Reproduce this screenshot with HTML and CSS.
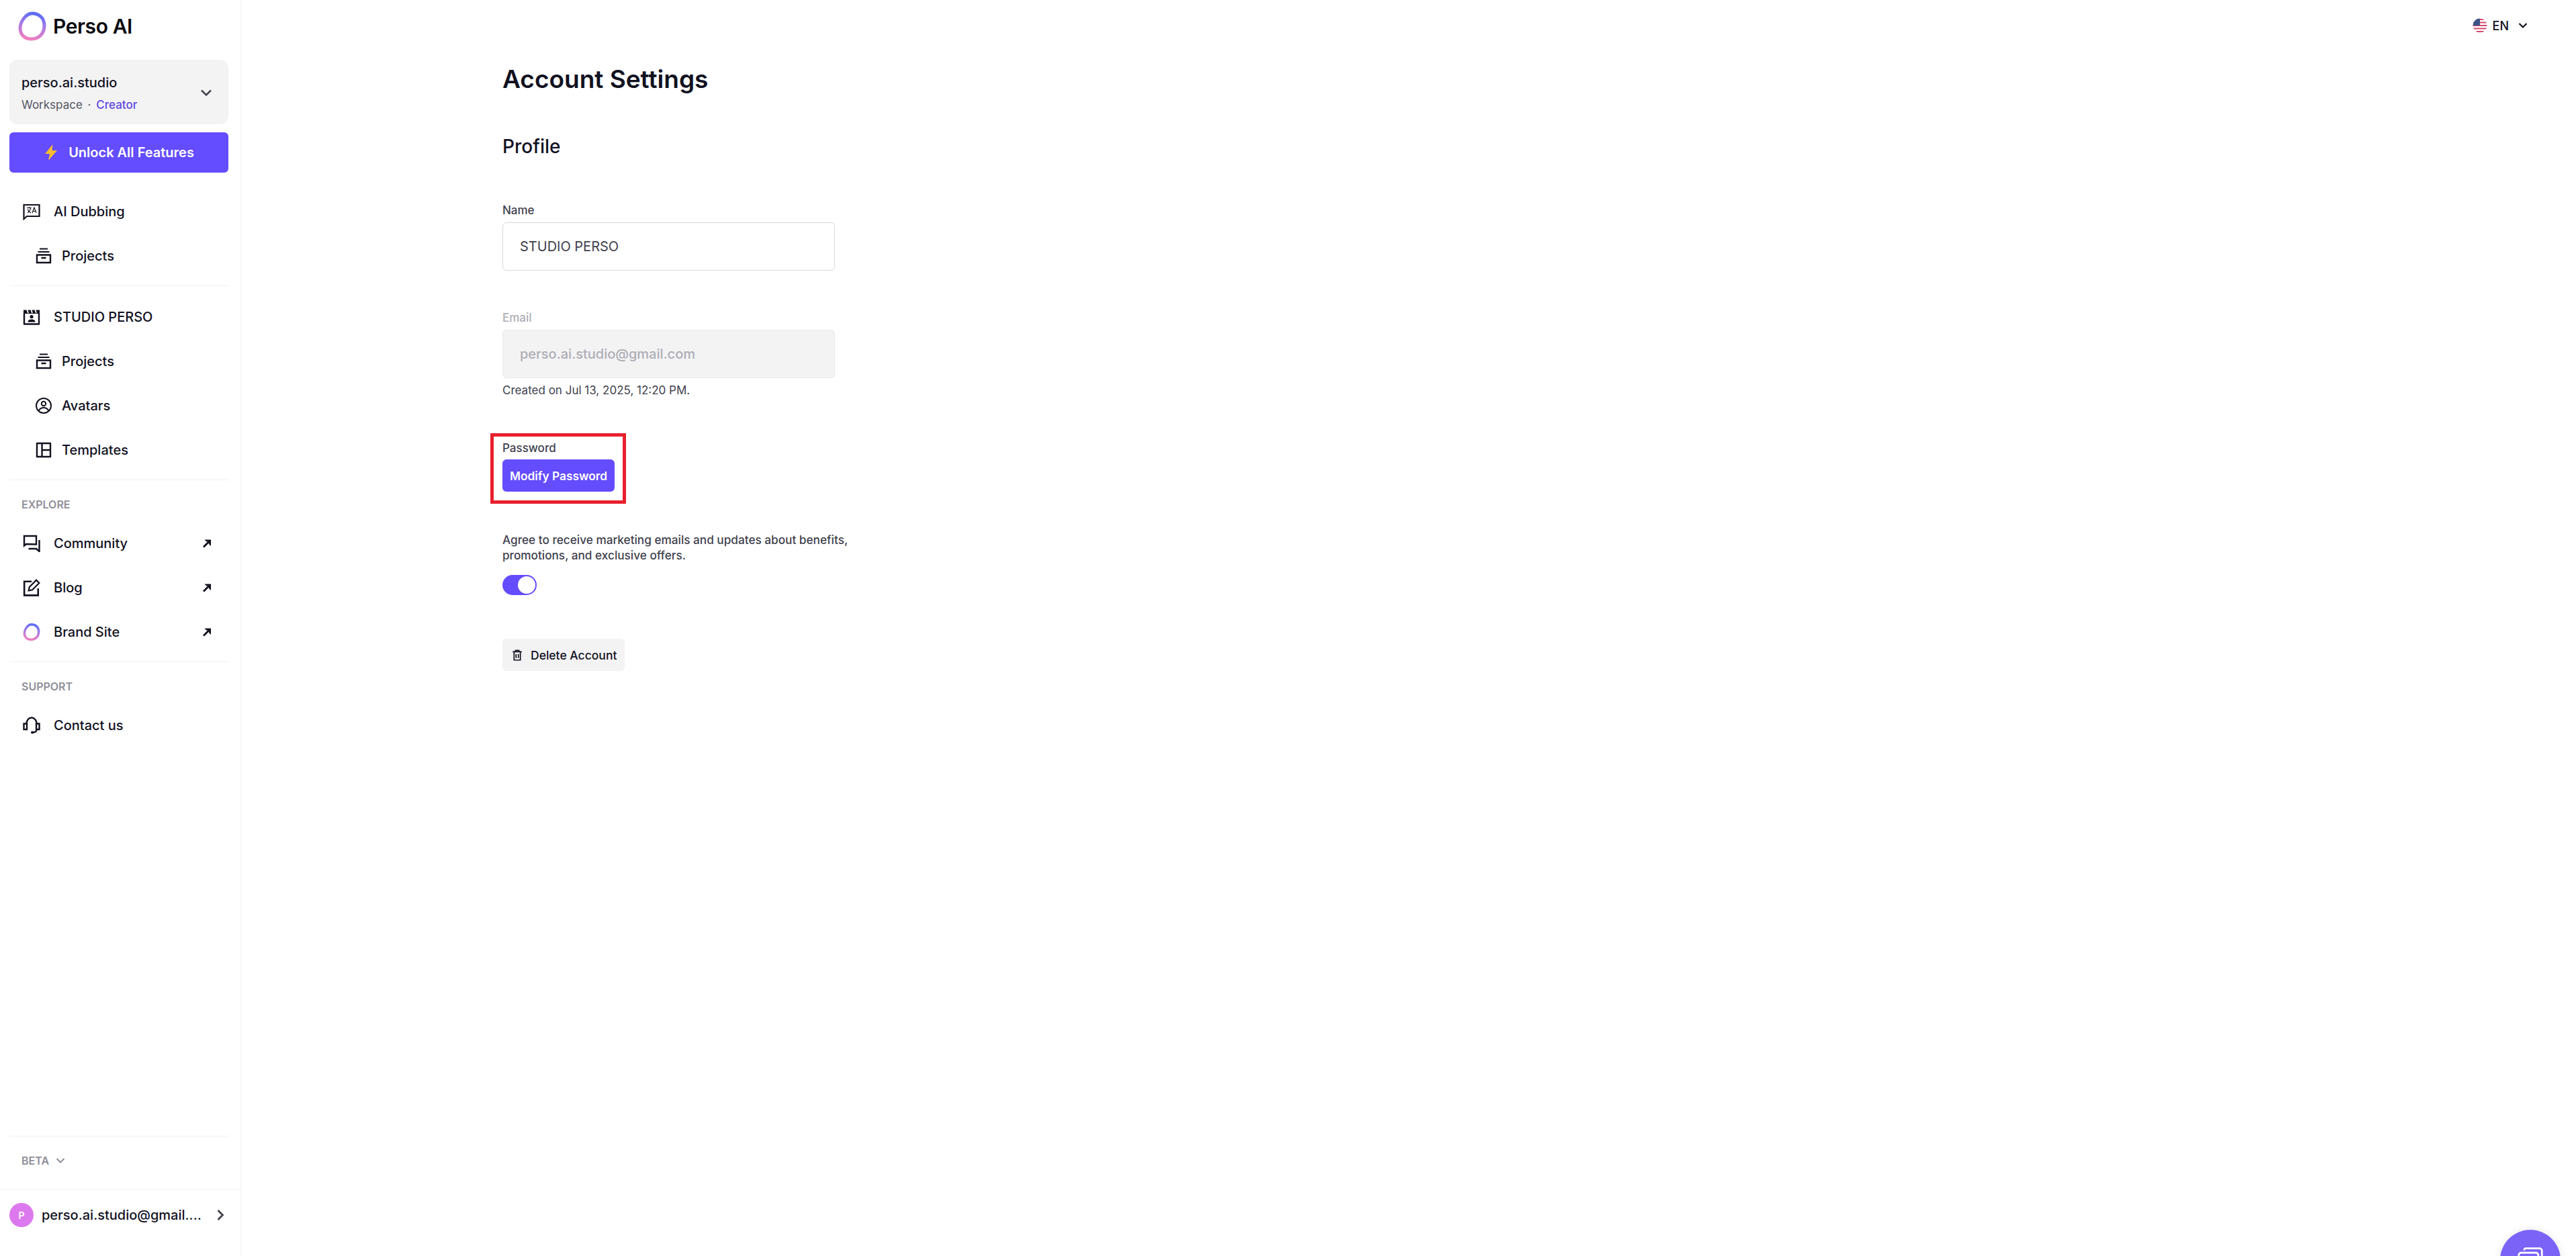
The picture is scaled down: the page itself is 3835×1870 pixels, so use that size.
FILE: index.html
```html
<!DOCTYPE html>
<html lang="en">
<head>
    <meta charset="UTF-8">
    <meta name="viewport" content="width=device-width, initial-scale=1.0">
    <title>Perso AI - Account Settings</title>
    <link rel="stylesheet" href="styles.css">
</head>
<body>
    <svg class="sprite" width="0" height="0">
        <defs>
            <linearGradient id="ringGrad" x1="0.6" y1="0" x2="0.4" y2="1">
                <stop offset="0" stop-color="#5b6cf5"/>
                <stop offset="0.45" stop-color="#a77be8"/>
                <stop offset="1" stop-color="#ee7fc0"/>
            </linearGradient>
            <symbol id="i-box" viewBox="0 0 24 24">
                <path d="M6 1.500h12M3.500 6h17" fill="none" stroke="currentColor" stroke-width="2.200"/>
                <path d="M2 10.500h20v11.500H2z M8.500 15h7" fill="none" stroke="currentColor" stroke-width="2.400"/>
            </symbol>
            <symbol id="i-out" viewBox="0 0 16 16">
                <path d="M3 13.500 11 5.500" fill="none" stroke="currentColor" stroke-width="2.800"/>
                <path d="M4.500 2.500h9.500V12L11 9V5.500H7.500z" fill="currentColor"/>
            </symbol>
        </defs>
    </svg>

    <aside class="sidebar">
        <div class="logo">
            <svg class="logo-ring" viewBox="0 0 42 44"><path d="M21 3c9 0 18 6 18 18s-8 20-19 20S3 34 3 25 11 3 21 3z" fill="none" stroke="url(#ringGrad)" stroke-width="5"/></svg>
            <span>Perso AI</span>
        </div>

        <div class="sidebar-top">
            <div class="workspace">
                <div>
                    <div class="workspace-name">perso.ai.studio</div>
                    <div class="workspace-role">Workspace <i>·</i> <b>Creator</b></div>
                </div>
                <svg class="chevron" viewBox="0 0 18 12"><path d="M2 2.500l7 7 7-7" fill="none" stroke="currentColor" stroke-width="2.600"/></svg>
            </div>
            <button class="unlock">
                <svg viewBox="0 0 18 24"><path d="M11.500 0 0 14h7l-2 10L18 9h-7.500z" fill="#f9bd2f"/></svg>
                Unlock All Features
            </button>
        </div>

        <nav class="nav-group first">
            <a class="nav-item">
                <svg viewBox="0 0 26 24"><path d="M1.500 2h23v17H6l-4.500 4z" fill="none" stroke="currentColor" stroke-width="2.200"/><path d="M6 6.500h7M9.500 5v1.500M7 14c2.500-1.500 4-4 4.500-7.500M7 8.500c1 2.500 3 4.500 5 5.500M14 14l3-8 3 8M15 11.500h4" fill="none" stroke="currentColor" stroke-width="1.200"/></svg>
                AI Dubbing
            </a>
            <a class="nav-item sub"><svg viewBox="0 0 24 24"><use href="#i-box"/></svg>Projects</a>
        </nav>

        <nav class="nav-group">
            <a class="nav-item">
                <svg viewBox="0 0 26 24"><path d="M2 7v15.500h22V7" fill="none" stroke="currentColor" stroke-width="2.400" stroke-linejoin="round"/><path d="M1 1.500h24v5.500H1z" fill="currentColor"/><path d="M6 0l2 6M12 0l2 6M18 0l2 6" stroke="#fff" stroke-width="1.800"/><circle cx="13" cy="11.500" r="2.600" fill="currentColor"/><path d="M7.500 19.500c0-3 2.500-4 5.500-4s5.500 1 5.500 4z" fill="currentColor"/></svg>
                STUDIO PERSO
            </a>
            <a class="nav-item sub"><svg viewBox="0 0 24 24"><use href="#i-box"/></svg>Projects</a>
            <a class="nav-item sub">
                <svg viewBox="0 0 24 24"><circle cx="12" cy="12" r="11" fill="none" stroke="currentColor" stroke-width="2"/><circle cx="12" cy="9" r="3.200" fill="none" stroke="currentColor" stroke-width="2"/><path d="M4.500 19.500c2-3.500 4.500-4.500 7.500-4.500s5.500 1 7.500 4.500" fill="none" stroke="currentColor" stroke-width="2"/></svg>
                Avatars
            </a>
            <a class="nav-item sub">
                <svg viewBox="0 0 24 24"><path d="M2 2h20v20H2z M9.500 2v20M9.500 12H22" fill="none" stroke="currentColor" stroke-width="2.400" stroke-linejoin="round"/></svg>
                Templates
            </a>
        </nav>

        <nav class="nav-group">
            <div class="nav-label">EXPLORE</div>
            <a class="nav-item">
                <svg viewBox="0 0 26 26"><path d="M20 14.500V2H2v14.500l3-2.500z" fill="none" stroke="currentColor" stroke-width="2.400"/><path d="M24.500 8v17l-4.500-4H8.500" fill="none" stroke="currentColor" stroke-width="2.400"/></svg>
                Community
                <svg class="out" viewBox="0 0 16 16"><use href="#i-out"/></svg>
            </a>
            <a class="nav-item">
                <svg viewBox="0 0 24 24"><path d="M12 3.500H2v19h19V13" fill="none" stroke="currentColor" stroke-width="2.400"/><path d="M8 16l1-5L18.500 1.500l4 4L13 15z" fill="none" stroke="currentColor" stroke-width="2"/></svg>
                Blog
                <svg class="out" viewBox="0 0 16 16"><use href="#i-out"/></svg>
            </a>
            <a class="nav-item">
                <svg viewBox="0 0 42 44"><path d="M21 3c9 0 18 6 18 18s-8 20-19 20S3 34 3 25 11 3 21 3z" fill="none" stroke="url(#ringGrad)" stroke-width="6"/></svg>
                Brand Site
                <svg class="out" viewBox="0 0 16 16"><use href="#i-out"/></svg>
            </a>
        </nav>

        <nav class="nav-group">
            <div class="nav-label">SUPPORT</div>
            <a class="nav-item">
                <svg viewBox="0 0 26 26"><path d="M5.500 10.500C5.500 5 9 1.500 13 1.500s7.500 3.500 7.500 9M20.500 19c0 3-2 4.500-5.500 4.500" fill="none" stroke="currentColor" stroke-width="2.400"/><path d="M1.500 10.500h4.500v8.500H1.500zM20 10.500h4.500v8.500H20z" fill="none" stroke="currentColor" stroke-width="2.400"/><circle cx="14" cy="23.500" r="2" fill="currentColor"/></svg>
                Contact us
            </a>
        </nav>

        <div class="beta">
            BETA
            <svg viewBox="0 0 14 10"><path d="M1.500 2l5.500 5.500L12.500 2" fill="none" stroke="currentColor" stroke-width="2"/></svg>
        </div>

        <div class="account">
            <span class="avatar">P</span>
            <span class="account-mail">perso.ai.studio@gmail....</span>
            <svg viewBox="0 0 12 18"><path d="M2.500 2l7 7-7 7" fill="none" stroke="currentColor" stroke-width="2.800"/></svg>
        </div>
    </aside>

    <main class="content">
        <div class="topbar">
            <div class="lang">
                <svg class="flag" viewBox="0 0 22 22">
                    <clipPath id="flagClip"><circle cx="11" cy="11" r="10.500"/></clipPath>
                    <g clip-path="url(#flagClip)">
                        <rect width="22" height="22" fill="#fff"/>
                        <path d="M0 2h22M0 6.500h22M0 11h22M0 15.500h22M0 20h22" stroke="#d5476c" stroke-width="2.200"/>
                        <rect width="11" height="11" fill="#3b5488"/>
                    </g>
                </svg>
                <span>EN</span>
                <svg class="lang-chevron" viewBox="0 0 14 10"><path d="M1.500 2l5.500 5.500L12.500 2" fill="none" stroke="currentColor" stroke-width="2.200"/></svg>
            </div>
        </div>

        <div class="settings">
            <h1>Account Settings</h1>
            <h2>Profile</h2>

            <div class="field">
                <label>Name</label>
                <div class="input">STUDIO PERSO</div>
            </div>

            <div class="field disabled">
                <label>Email</label>
                <div class="input">perso.ai.studio@gmail.com</div>
                <p class="hint">Created on Jul 13, 2025, 12:20 PM.</p>
            </div>

            <div class="field password">
                <label>Password</label>
                <button class="primary">Modify Password</button>
                <div class="highlight"></div>
            </div>

            <div class="marketing">
                <p>Agree to receive marketing emails and updates about benefits, promotions, and exclusive offers.</p>
                <div class="toggle"><span></span></div>
            </div>

            <button class="delete">
                <svg viewBox="0 0 16 20"><path d="M0 4h16M5 4V1.500h6V4M2.500 4v14.500h11V4M6 8v7M10 8v7" fill="none" stroke="currentColor" stroke-width="2"/></svg>
                Delete Account
            </button>
        </div>
    </main>

    <div class="chat-fab">
        <svg viewBox="0 0 44 44"><path d="M12 6a3 3 0 0 1 3-3h22a4 4 0 0 1 4 4v20" fill="none" stroke="#fff" stroke-width="3"/><rect x="3" y="10" width="32" height="26" rx="4" fill="none" stroke="#fff" stroke-width="3"/></svg>
    </div>
</body>
</html>
```

FILE: styles.css
```css
* {
    margin: 0;
    padding: 0;
    box-sizing: border-box;
    font-family: 'Inter', 'Noto Sans', sans-serif;
}

html, body {
    height: 100%;
    overflow: hidden;
}

body {
    display: flex;
    background: white;
    color: #11111f;
}

button {
    border: none;
    cursor: pointer;
}

.sprite {
    position: absolute;
}

/* sidebar */
.sidebar {
    width: 359px;
    height: 1870px;
    flex-shrink: 0;
    display: flex;
    flex-direction: column;
    border-right: 1px solid #f0f0f1;
}

.logo {
    height: 89px;
    padding: 0 0 12px 27px;
    display: flex;
    align-items: center;
    gap: 10px;
    font-size: 30px;
    font-weight: 600;
    letter-spacing: -0.4px;
    color: #0a0a0f;
}

.logo-ring {
    width: 42px;
    height: 44px;
}

.sidebar-top {
    padding: 0 18px 0 14px;
}

.workspace {
    height: 96px;
    padding: 2px 24px 0 18px;
    background: #f3f3f4;
    border-radius: 12px;
    display: flex;
    align-items: center;
    justify-content: space-between;
}

.workspace-name {
    font-size: 20px;
    font-weight: 500;
    margin-bottom: 11px;
}

.workspace-role {
    font-size: 17px;
    color: #55555f;
}

.workspace-role i {
    font-style: normal;
    margin: 0 3px;
}

.workspace-role b {
    font-weight: 500;
    color: #5d4ae0;
}

.chevron {
    width: 18px;
    height: 12px;
    color: #44444f;
}

.unlock {
    width: 100%;
    height: 60px;
    margin-top: 12px;
    padding-left: 2px;
    background: #644cff;
    color: white;
    border-radius: 6px;
    font-size: 20px;
    font-weight: 600;
    display: flex;
    align-items: center;
    justify-content: center;
    gap: 17px;
}

.unlock svg {
    width: 18px;
    height: 24px;
}

.nav-group {
    margin: 0 18px 0 14px;
    padding: 12px 0;
    border-bottom: 1px solid #f0f0f1;
}

.nav-group.first {
    padding-top: 24px;
}

.nav-group:last-of-type {
    border-bottom: none;
}

.nav-label {
    height: 48px;
    padding-left: 18px;
    display: flex;
    align-items: center;
    font-size: 16px;
    font-weight: 600;
    color: #8f8f99;
}

.nav-item {
    height: 66px;
    padding: 1px 0 0 20px;
    display: flex;
    align-items: center;
    gap: 20px;
    font-size: 20px;
    font-weight: 500;
    color: #11111f;
}

.nav-item svg {
    width: 26px;
    height: 26px;
    flex-shrink: 0;
}

.nav-item.sub {
    padding-left: 39px;
    gap: 15px;
}

.nav-item.sub svg {
    width: 24px;
    height: 24px;
}

.nav-item svg.out {
    width: 16px;
    height: 16px;
    margin-left: auto;
    margin-right: 24px;
}

.beta {
    margin: auto 18px 0 14px;
    height: 79px;
    padding: 0 0 6px 18px;
    border-top: 1px solid #f0f0f1;
    display: flex;
    align-items: center;
    gap: 10px;
    font-size: 16px;
    font-weight: 600;
    color: #8f8f99;
}

.beta svg {
    width: 14px;
    height: 10px;
}

.account {
    height: 100px;
    padding: 20px 24px 0 14px;
    border-top: 1px solid #f0f0f1;
    display: flex;
    align-items: flex-start;
}

.avatar {
    width: 36px;
    height: 36px;
    border-radius: 50%;
    background: #dd79ee;
    color: white;
    font-size: 14px;
    font-weight: 600;
    display: flex;
    align-items: center;
    justify-content: center;
}

.account-mail {
    margin-left: 12px;
    line-height: 36px;
    font-size: 20px;
    font-weight: 500;
}

.account svg {
    width: 12px;
    height: 18px;
    margin: 9px 0 0 auto;
    color: #44444f;
}

/* main area */
.content {
    flex: 1;
    min-width: 0;
}

.topbar {
    height: 76px;
    padding-right: 72px;
    display: flex;
    justify-content: flex-end;
    align-items: center;
}

.lang {
    display: flex;
    align-items: center;
    font-size: 18px;
    font-weight: 500;
}

.flag {
    width: 22px;
    height: 22px;
    margin-right: 8px;
}

.lang-chevron {
    width: 14px;
    height: 10px;
    margin-left: 14px;
}

.settings {
    padding: 18px 0 0 389px;
    width: 1000px;
}

h1 {
    font-size: 37px;
    line-height: 48px;
    font-weight: 600;
}

h2 {
    margin-top: 54px;
    font-size: 28px;
    line-height: 44px;
    font-weight: 500;
}

.field {
    width: 495px;
    margin-top: 62px;
    position: relative;
}

.field label {
    display: block;
    font-size: 17px;
    line-height: 22px;
    font-weight: 500;
    color: #3f3f4d;
    margin-bottom: 7px;
}

.input {
    height: 72px;
    padding: 0 25px;
    border: 1px solid #d8d8dc;
    border-radius: 6px;
    display: flex;
    align-items: center;
    font-size: 20px;
    color: #3f3f4d;
}

.field.disabled {
    margin-top: 59px;
}

.field.disabled label {
    color: #adadb5;
}

.field.disabled .input {
    background: #f3f3f4;
    border-color: #e8e8ea;
    color: #adadb5;
    font-weight: 500;
}

.hint {
    margin-top: 6px;
    font-size: 17px;
    line-height: 25px;
    color: #3f3f4d;
}

.field.password {
    margin-top: 62px;
    width: 167px;
}

.field.password label {
    margin-bottom: 6px;
}

.primary {
    width: 167px;
    height: 48px;
    background: #644cff;
    color: white;
    border-radius: 6px;
    font-size: 17.3px;
    font-weight: 600;
}

/* red annotation box around the password field */
.highlight {
    position: absolute;
    left: -18px;
    top: -11px;
    width: 202px;
    height: 105px;
    border: 5px solid #e8202e;
}

.marketing {
    margin-top: 60px;
    width: 540px;
}

.marketing p {
    font-size: 17.2px;
    line-height: 23px;
    font-weight: 500;
    color: #3f3f4d;
}

.toggle {
    width: 51px;
    height: 30px;
    margin-top: 18px;
    padding: 2px;
    background: #644cff;
    border-radius: 15px;
    display: flex;
    justify-content: flex-end;
}

.toggle span {
    width: 26px;
    height: 26px;
    background: white;
    border-radius: 50%;
}

.delete {
    margin-top: 65px;
    width: 182px;
    height: 48px;
    padding-left: 15px;
    background: #f3f3f4;
    color: #11111f;
    border-radius: 6px;
    font-size: 17.5px;
    font-weight: 500;
    display: flex;
    align-items: center;
    gap: 13px;
}

.delete svg {
    width: 14px;
    height: 17px;
}

.chat-fab {
    position: fixed;
    left: 3722px;
    top: 1831px;
    width: 90px;
    height: 90px;
    border-radius: 50%;
    background: #7a63f6;
    box-shadow: 0 0 12px rgba(0,0,0,0.1);
    display: flex;
    align-items: center;
    justify-content: center;
}

.chat-fab svg {
    width: 40px;
    height: 40px;
}
```
